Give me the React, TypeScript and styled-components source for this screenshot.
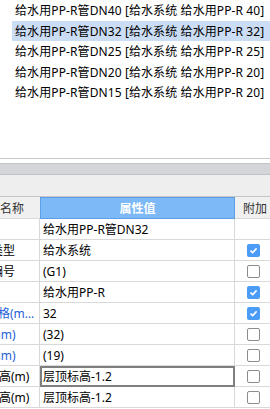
import React from "react";
import styled, { createGlobalStyle } from "styled-components";

const GlobalStyle = createGlobalStyle`
  html, body {
    margin: 0;
    padding: 0;
    background: #ffffff;
    overflow: hidden;
  }
  body {
    font-family: "Noto Sans", "Noto Sans CJK SC", sans-serif;
    font-size: 12px;
    color: #000000;
  }
`;

interface PipeItem {
  text: string;
}

interface PropRow {
  label: string;
  indent: number;
  value: string;
  linked?: boolean;
  extra?: boolean | null;
  editing?: boolean;
}

const pipes: PipeItem[] = [
  { text: "给水用PP-R管DN40 [给水系统 给水用PP-R 40]" },
  { text: "给水用PP-R管DN32 [给水系统 给水用PP-R 32]" },
  { text: "给水用PP-R管DN25 [给水系统 给水用PP-R 25]" },
  { text: "给水用PP-R管DN20 [给水系统 给水用PP-R 20]" },
  { text: "给水用PP-R管DN15 [给水系统 给水用PP-R 20]" },
];

const rows: PropRow[] = [
  { label: "名称", indent: 37, value: "给水用PP-R管DN32", extra: null },
  { label: "系统类型", indent: 33, value: "给水系统", extra: true },
  { label: "系统编号", indent: 33, value: "(G1)", extra: false },
  { label: "材质", indent: 37, value: "给水用PP-R", extra: true },
  { label: "管径规格(mm)", indent: 38, value: "32", linked: true, extra: true },
  { label: "外径(mm)", indent: 38, value: "(32)", linked: true, extra: false },
  { label: "内径(mm)", indent: 38, value: "(19)", linked: true, extra: false },
  { label: "起点标高(m)", indent: 37, value: "层顶标高-1.2", extra: false, editing: true },
  { label: "终点标高(m)", indent: 37, value: "层顶标高-1.2", extra: false },
];

const Page = styled.div`
  width: 270px;
  height: 409px;
  display: flex;
  flex-direction: column;
  overflow: hidden;
  background: #ffffff;
`;

const PipeList = styled.ul`
  list-style: none;
  margin: 0;
  padding: 0;
  height: 158px;
  flex-shrink: 0;
`;

const PipeEntry = styled.li<{ $selected?: boolean }>`
  height: 20.5px;
  margin-left: 12px;
  padding-left: 3px;
  display: flex;
  align-items: center;
  white-space: nowrap;
  letter-spacing: 0.1px;
  background: ${(p) => (p.$selected ? "#cbddf4" : "transparent")};
`;

const Splitter = styled.div`
  height: 4px;
  border-top: 1px solid #c8c8c8;
  flex-shrink: 0;
`;

const ToolBand = styled.div`
  height: 10px;
  background: #d4d5d9;
  border-top: 1px solid #c2c3c7;
  border-bottom: 1px solid #c2c3c7;
  flex-shrink: 0;
`;

const TabStrip = styled.div`
  height: 21px;
  background: #eeeeee;
  border-bottom: 1px solid #c6c6c6;
  flex-shrink: 0;
`;

const Grid = styled.div`
  display: grid;
  grid-template-columns: 40px 195px 1fr;
  grid-auto-rows: 21px;
  grid-template-rows: 22px;
`;

const HeadCell = styled.div<{ $accent?: boolean; $align: "end" | "center" | "start" }>`
  display: flex;
  align-items: center;
  justify-content: ${(p) =>
    p.$align === "end" ? "flex-end" : p.$align === "center" ? "center" : "flex-start"};
  padding: ${(p) => (p.$align === "end" ? "0 16px 0 0" : p.$align === "start" ? "0 0 0 8px" : "0")};
  box-sizing: border-box;
  white-space: nowrap;
  overflow: hidden;
  font-weight: ${(p) => (p.$accent ? 600 : 400)};
  background: ${(p) => (p.$accent ? "#7cb9f6" : "#f0f0f0")};
  color: ${(p) => (p.$accent ? "#ffffff" : "#333333")};
  border: ${(p) => (p.$accent ? "1px solid #5c9fe8" : "none")};
  border-bottom: 1px solid ${(p) => (p.$accent ? "#5c9fe8" : "#d9d9d9")};
`;

const LabelCell = styled.div<{ $linked?: boolean }>`
  overflow: hidden;
  display: flex;
  align-items: center;
  border-right: 1px solid #d9d9d9;
  border-bottom: 1px solid #d9d9d9;
  box-sizing: border-box;
  color: ${(p) => (p.$linked ? "#1f5fd6" : "#000000")};
`;

const LabelText = styled.span<{ $indent: number }>`
  flex-shrink: 0;
  margin-left: -${(p) => p.$indent}px;
  width: ${(p) => p.$indent + 35}px;
  white-space: nowrap;
  overflow: hidden;
  text-overflow: ellipsis;
`;

const ValueCell = styled.div<{ $editing?: boolean }>`
  display: flex;
  align-items: center;
  padding-left: 3px;
  white-space: nowrap;
  overflow: hidden;
  box-sizing: border-box;
  border-right: 1px solid #d9d9d9;
  border-bottom: 1px solid #d9d9d9;
  outline: ${(p) => (p.$editing ? "2px solid #7f7f7f" : "none")};
  outline-offset: -2px;
`;

const ExtraCell = styled.div`
  display: flex;
  align-items: center;
  padding-left: 12px;
  box-sizing: border-box;
  border-bottom: 1px solid #d9d9d9;
`;

const Box = styled.span<{ $on: boolean }>`
  width: 13px;
  height: 13px;
  box-sizing: border-box;
  border-radius: 2px;
  display: flex;
  align-items: center;
  justify-content: center;
  background: ${(p) => (p.$on ? "#4a9cf6" : "#ffffff")};
  border: ${(p) => (p.$on ? "none" : "1.5px solid #8c8c8c")};
`;

const CheckBox = ({ on }: { on: boolean }) => (
  <Box $on={on}>
    {on && (
      <svg width="9" height="9" viewBox="0 0 9 9">
        <path d="M1.5 4.6 L3.7 6.6 L7.6 2.4" fill="none" stroke="#ffffff" strokeWidth="1.6" />
      </svg>
    )}
  </Box>
);

export default function App() {
  return (
    <>
      <GlobalStyle />
      <Page>
        <PipeList>
          {pipes.map((p, i) => (
            <PipeEntry key={p.text} $selected={i === 1}>
              {p.text}
            </PipeEntry>
          ))}
        </PipeList>
        <Splitter />
        <ToolBand />
        <TabStrip />
        <Grid>
          <HeadCell $align="end">名称</HeadCell>
          <HeadCell $align="center" $accent>
            属性值
          </HeadCell>
          <HeadCell $align="start">附加</HeadCell>
          {rows.map((r) => (
            <React.Fragment key={r.label}>
              <LabelCell $linked={r.linked}>
                <LabelText $indent={r.indent}>{r.label}</LabelText>
              </LabelCell>
              <ValueCell $editing={r.editing}>{r.value}</ValueCell>
              <ExtraCell>{r.extra !== null && r.extra !== undefined && <CheckBox on={r.extra} />}</ExtraCell>
            </React.Fragment>
          ))}
        </Grid>
      </Page>
    </>
  );
}
